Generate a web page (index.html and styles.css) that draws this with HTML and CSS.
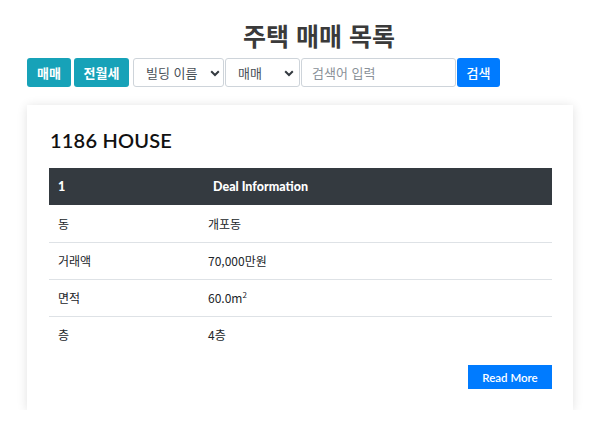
FILE: index.html
```html
<!DOCTYPE html>
<html lang="ko">
<head>
<meta charset="utf-8">
<title>주택 매매 목록</title>
<link rel="stylesheet" href="styles.css">
</head>
<body>
<div class="page">
  <h1 class="title">주택 매매 목록</h1>
  <div class="toolbar">
    <button class="btn btn-teal btn-deal">매매</button>
    <button class="btn btn-teal btn-rent">전월세</button>
    <span class="sel sel-name">
      <select><option>빌딩 이름</option></select>
      <svg class="chev" width="10" height="7" viewBox="0 0 10 7"><path d="M1.2 1.3 L5 5 L8.8 1.3" fill="none" stroke="#343a40" stroke-width="2"/></svg>
    </span>
    <span class="sel sel-type">
      <select><option>매매</option></select>
      <svg class="chev" width="10" height="7" viewBox="0 0 10 7"><path d="M1.2 1.3 L5 5 L8.8 1.3" fill="none" stroke="#343a40" stroke-width="2"/></svg>
    </span>
    <input class="search" type="text" placeholder="검색어 입력">
    <button class="btn btn-blue btn-search">검색</button>
  </div>

  <div class="card">
    <h2 class="card-title">1186 HOUSE</h2>
    <table class="info">
      <thead>
        <tr><th class="c1">1</th><th class="c2">Deal Information</th></tr>
      </thead>
      <tbody>
        <tr><td>동</td><td>개포동</td></tr>
        <tr><td>거래액</td><td>70,000만원</td></tr>
        <tr><td>면적</td><td>60.0m<sup>2</sup></td></tr>
        <tr class="last"><td>층</td><td>4층</td></tr>
      </tbody>
    </table>
    <div class="actions">
      <button class="more">Read More</button>
    </div>
  </div>
</div>
</body>
</html>
```

FILE: styles.css
```css
* { box-sizing: border-box; }

body {
  margin: 0;
  background: #fff;
  font-family: "Noto Sans CJK KR", "Noto Sans", sans-serif;
  color: #212529;
}

.page {
  padding: 0 16px 0 27px;
}

.title {
  margin: 0;
  padding: 18px 0 0 38px;
  height: 58px;
  text-align: center;
  font-size: 25px;
  line-height: 34px;
  font-weight: 700;
  color: #3a3a3a;
}

.toolbar {
  display: flex;
  align-items: stretch;
  height: 29px;
}

.btn {
  border: 0;
  color: #fff;
  font-family: "Noto Sans CJK KR", sans-serif;
  font-weight: 700;
  font-size: 13px;
  padding: 0;
  border-radius: 3px;
}

.btn-teal { background: #17a2b8; }
.btn-blue { background: #007bff; font-weight: 500; }

.btn-deal { width: 44px; }
.btn-rent { width: 55px; margin-left: 3px; }
.btn-search { width: 43px; margin-left: 1px; }

.sel {
  position: relative;
  display: block;
}

.sel select {
  appearance: none;
  -webkit-appearance: none;
  height: 100%;
  width: 100%;
  border: 1px solid #ced4da;
  border-radius: 3px;
  background: #fff;
  color: #495057;
  font-family: "Noto Sans CJK KR", sans-serif;
  font-size: 13px;
  padding: 0 0 0 12px;
}

.sel-name { width: 91px; margin-left: 4px; }
.sel-type { width: 75px; margin-left: 1px; }

.chev {
  position: absolute;
  right: 6px;
  top: 12px;
}
.sel-name .chev { right: 4px; }

.search {
  width: 155px;
  margin-left: 1px;
  border: 1px solid #ced4da;
  border-radius: 3px;
  font-family: "Noto Sans CJK KR", sans-serif;
  font-size: 13px;
  padding: 0 10px;
  color: #495057;
}
.search::placeholder { color: #8a9199; }

.card {
  margin-top: 18px;
  width: 546px;
  background: #fff;
  box-shadow: 0 1px 10px rgba(0, 0, 0, 0.12);
  padding: 22px 21px 21px 22px;
}

.card-title {
  margin: 0 0 15px 1px;
  font-family: "Lato", "Noto Sans", sans-serif;
  font-size: 20px;
  line-height: 26px;
  font-weight: 600;
  color: #111;
  letter-spacing: 0.2px;
}

.info {
  width: 100%;
  border-collapse: collapse;
  font-size: 12px;
}

.info th {
  background: #343a40;
  color: #fff;
  text-align: left;
  font-family: "Lato", "Noto Sans", sans-serif;
  font-weight: 900;
  font-size: 12.5px;
  height: 37px;
  padding: 0 9px;
}

.info th.c1 { width: 159px; }
.info th.c2 { padding-left: 5px; }

.info td {
  height: 37px;
  padding: 0 9px;
  border-top: 1px solid #dee2e6;
  color: #212529;
  font-family: "Noto Sans CJK KR", sans-serif;
  font-size: 12px;
}
.info tbody tr:first-child td { border-top: 0; }

.info td:first-child { padding-left: 9px; }
.info td:last-child { padding-left: 0; }

.info sup {
  font-size: 8px;
  vertical-align: 5px;
  line-height: 0;
}

.actions {
  display: flex;
  justify-content: flex-end;
  margin-top: 12px;
}

.more {
  width: 84px;
  height: 24px;
  border: 0;
  border-radius: 0;
  background: #007bff;
  color: #fff;
  font-family: "Lato", "Noto Sans", sans-serif;
  font-size: 11.5px;
  font-weight: 600;
  padding: 0;
}
```
